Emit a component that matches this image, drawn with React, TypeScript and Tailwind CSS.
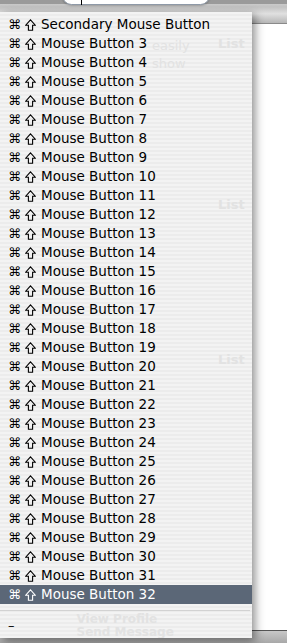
const items = [
  "Secondary Mouse Button",
  ...Array.from({ length: 30 }, (_, i) => `Mouse Button ${i + 3}`),
];

// faint window content seen through the translucent menu
const ghosts = [
  { text: "easily", cls: "left-[152px] top-[24px]" },
  { text: "show", cls: "left-[152px] top-[42px]" },
  { text: "List", cls: "left-[218px] top-[22px] font-bold" },
  { text: "List", cls: "left-[218px] top-[183px] font-bold" },
  { text: "List", cls: "left-[218px] top-[338px] font-bold" },
];

function ShiftIcon() {
  return (
    <svg width="11" height="12" viewBox="0 0 11 12" className="block">
      <path
        d="M5.5 0.9 L10.3 6.2 H7.6 V11.3 H3.4 V6.2 H0.7 Z"
        fill="none"
        stroke="currentColor"
        strokeWidth="1.1"
        strokeLinejoin="miter"
      />
    </svg>
  );
}

export default function App() {
  return (
    <div
      className="relative h-[643px] w-[287px] overflow-hidden bg-white"
      style={{ fontFamily: '"DejaVu Sans", "Liberation Sans", sans-serif' }}
    >
      {/* toolbar behind the menu */}
      <div className="absolute left-0 top-0 h-[24px] w-[287px] border-b border-[#8a8a8a] bg-[linear-gradient(#d4d4d4,#c2c2c2_30%,#e0e0e0_60%,#b6b6b6)]" />
      <div className="absolute left-0 top-0 h-[4px] w-[287px] bg-[#9a9a9a]" />
      <div className="absolute left-[62px] top-[-14px] h-[19px] w-[148px] rounded-[10px] border border-[#8f9aa8] bg-white shadow-[0_1px_2px_rgba(0,0,0,0.2)]">
        <div className="absolute left-[18px] top-[9px] h-[9px] w-px bg-black" />
      </div>

      {/* window content behind the menu */}
      <div className="absolute left-0 top-[24px] h-[606px] w-[287px] bg-white" />
      <div className="absolute bottom-0 left-0 h-[13px] w-[287px] border-t border-[#555] bg-[linear-gradient(#c8c8c8,#a8a8a8)]" />

      {/* the menu */}
      <div className="absolute left-0 top-[12px] flex h-[626px] w-[252px] flex-col overflow-hidden bg-[repeating-linear-gradient(#f3f3f3_0px,#f3f3f3_2px,#ececec_2px,#ececec_4px)] pt-[3px] shadow-[3px_3px_9px_rgba(0,0,0,0.45)]">
        {ghosts.map((g, i) => (
          <span
            key={i}
            className={`pointer-events-none absolute whitespace-nowrap text-[13px] leading-[19px] text-[#e2e2e2] ${g.cls}`}
          >
            {g.text}
          </span>
        ))}
        {items.map((label, i) => {
          const selected = i === items.length - 1;
          return (
            <div
              key={label}
              className={`relative flex h-[19px] items-center whitespace-nowrap text-[13.5px] ${
                selected ? "bg-[#5b6777] text-white" : "text-black"
              }`}
            >
              <span className="w-[17px] pl-[8px] text-[13px] leading-none">⌘</span>
              <span className="ml-[8px] w-[16px]">
                <ShiftIcon />
              </span>
              <span>{label}</span>
            </div>
          );
        })}
        <div className="mt-[6px] h-px w-[250px] bg-[#d2d2d2]" />
        <div className="relative flex h-[19px] items-start gap-[62px] pl-[8px] pt-[2px] text-[13px] text-black">
          <span className="mt-[6px] leading-[13px]">–</span>
          <span className="flex flex-col text-[12px] font-bold leading-[13px] text-[#e2e2e2]">
            <span>View Profile</span>
            <span>Send Message</span>
          </span>
        </div>
      </div>
    </div>
  );
}
